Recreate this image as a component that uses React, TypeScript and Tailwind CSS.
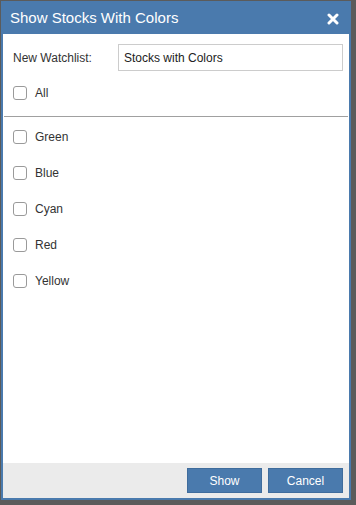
const colors = ["Green", "Blue", "Cyan", "Red", "Yellow"];

const Box = () => (
  <span className="w-[14px] h-[14px] rounded-[3px] border border-[#9a9a9a] bg-white shrink-0"></span>
);

const App = () => {
  return (
    <main
      className="w-[356px] h-[505px] bg-[#5b5b5b] pt-[1px] pl-[1px]"
      style={{ fontFamily: '"Liberation Sans", Arial, sans-serif' }}
    >
      <div className="w-[350px] h-[499px] border-2 border-[#4a7aad] bg-white flex flex-col">
        <div className="h-[31px] bg-[#4a7aad] flex items-center justify-between pl-[7px] pr-[10px] shrink-0">
          <span className="text-white text-[15px]">Show Stocks With Colors</span>
          <svg width="12" height="12" viewBox="0 0 12 12">
            <path
              d="M2 2 L10 10 M10 2 L2 10"
              stroke="#fff"
              strokeWidth="3"
              strokeLinecap="round"
            />
          </svg>
        </div>

        <div className="flex-1 flex flex-col">
          <div className="flex items-center pl-[10px] pr-[6px] pt-[10px]">
            <span className="text-[12px] text-[#333] w-[105px]">New Watchlist:</span>
            <div className="flex-1 h-[27px] border border-[#cccccc] flex items-center px-[5px] text-[12px] text-[#222]">
              Stocks with Colors
            </div>
          </div>
          <label className="flex items-center gap-[8px] pl-[10px] h-[20px] mt-[12px] text-[12px] text-[#333]">
            <Box />
            All
          </label>
          <div className="mt-[13px] h-[1px] bg-[#a0a0a0] mx-[1px]"></div>
          <div className="flex flex-col gap-[16px] pt-[10px]">
            {colors.map((c) => (
              <label
                key={c}
                className="flex items-center gap-[8px] pl-[10px] h-[20px] text-[12px] text-[#333]"
              >
                <Box />
                {c}
              </label>
            ))}
          </div>
        </div>

        <div className="h-[35px] bg-[#ebebeb] flex items-center justify-end gap-[6px] pr-[6px] shrink-0">
          <button className="w-[75px] h-[25px] bg-[#4a7aad] border border-[#3f6c9c] text-white text-[12px] leading-[22px]">
            Show
          </button>
          <button className="w-[75px] h-[25px] bg-[#4a7aad] border border-[#3f6c9c] text-white text-[12px] leading-[22px]">
            Cancel
          </button>
        </div>
      </div>
    </main>
  );
};

export default App;
